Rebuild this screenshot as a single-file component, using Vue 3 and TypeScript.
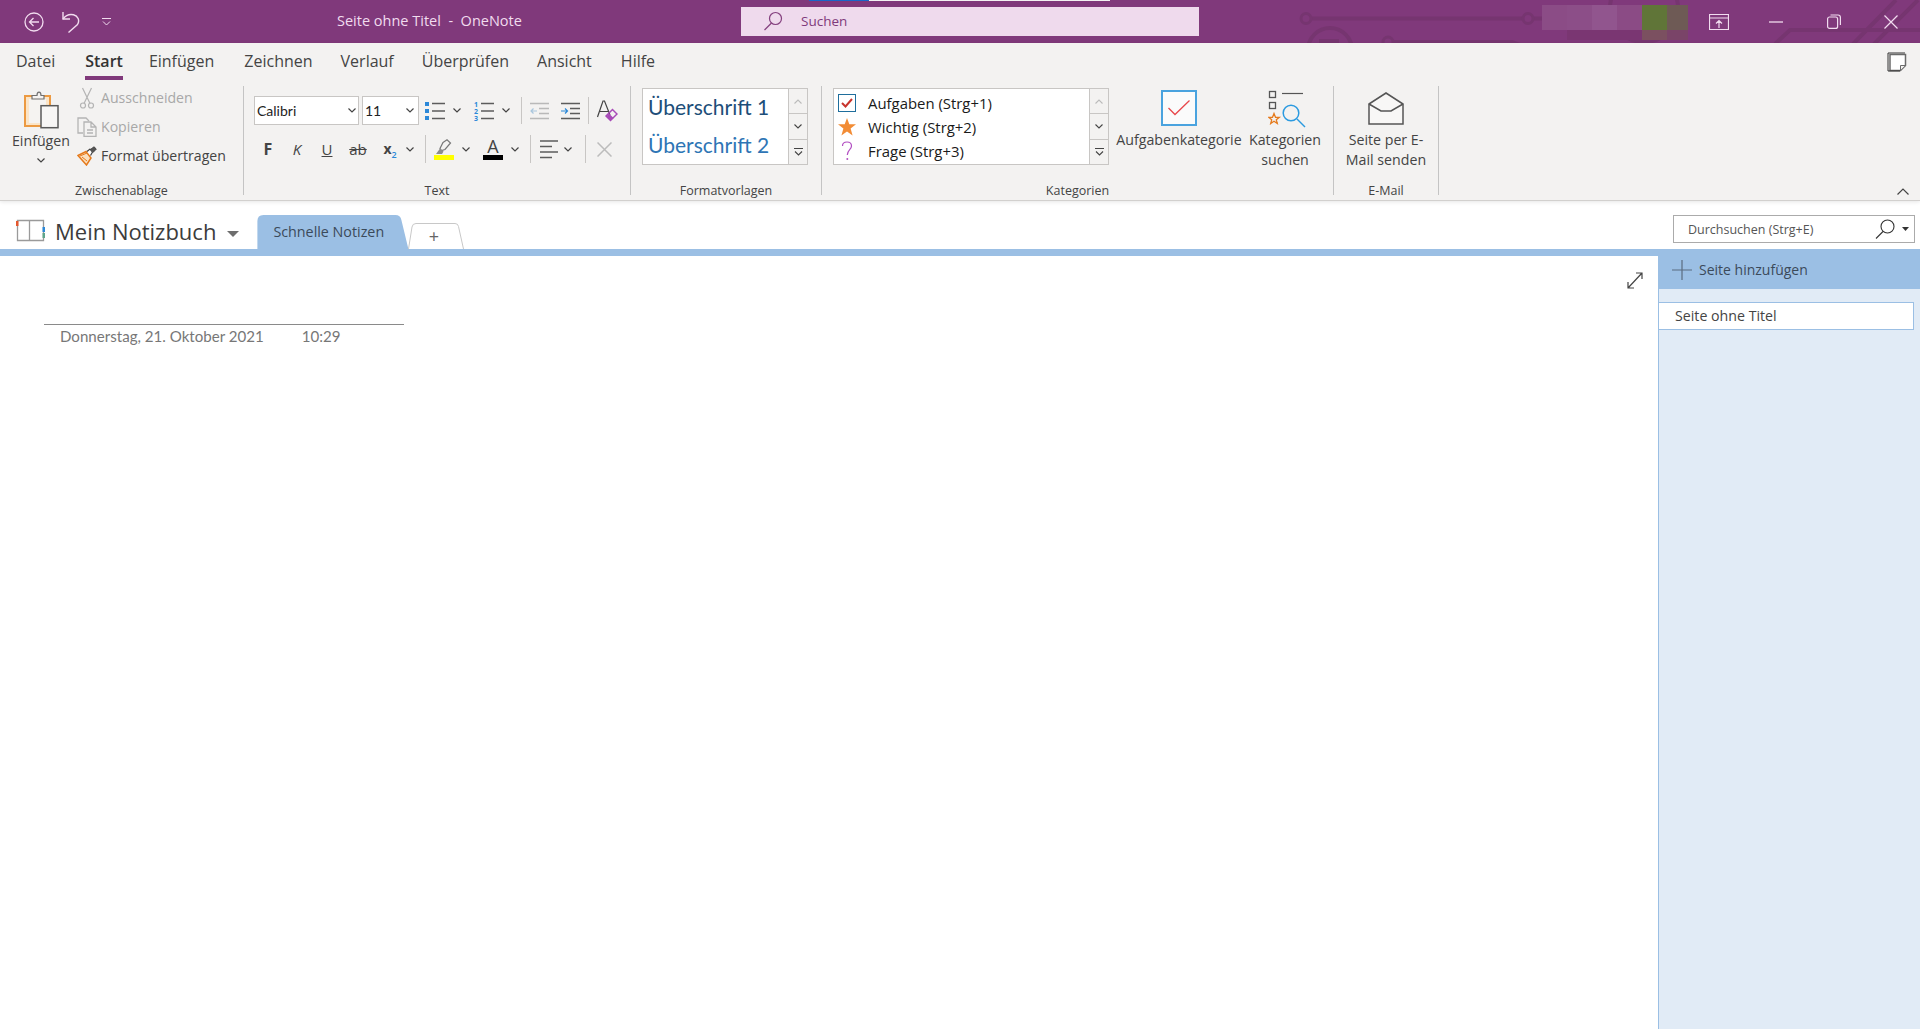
<script setup lang="ts">
const tabs = ['Datei', 'Start', 'Einfügen', 'Zeichnen', 'Verlauf', 'Überprüfen', 'Ansicht', 'Hilfe']
</script>

<template>
  <div class="app">
    <header class="titlebar">
      <svg class="title-art" width="1920" height="43" viewBox="0 0 1920 43" fill="none" stroke="#763570">
        <path d="M1312 18.5H1522M1534 18.5H1545" stroke-width="4" />
        <circle cx="1306" cy="18.5" r="5" stroke-width="3" />
        <circle cx="1528" cy="18.5" r="5" stroke-width="3" />
        <circle cx="1330" cy="50" r="22" stroke-width="4" />
        <path d="M1319 43V39H1339V43" fill="#763570" stroke="none" />
        <circle cx="1388" cy="42" r="5" stroke-width="3" />
        <path d="M1393 42H1512L1520 45" stroke-width="4" />
        <circle cx="1644" cy="8" r="34" stroke-width="4" />
        <path d="M1775 44L1790 30H1920M1853 44L1896 0M1874 44L1918 0" stroke-width="4" />
        <g stroke="none">
          <rect x="1542" y="5" width="25" height="25" fill="#8b4c86" />
          <rect x="1567" y="5" width="25" height="25" fill="#8c4e88" />
          <rect x="1592" y="5" width="25" height="25" fill="#91558e" />
          <rect x="1617" y="5" width="25" height="25" fill="#8b4b85" />
          <rect x="1642" y="5" width="25" height="25" fill="#607538" />
          <rect x="1667" y="5" width="21" height="25" fill="#6e5a55" />
          <rect x="1567" y="30" width="75" height="10" fill="#7a3672" />
          <rect x="1642" y="30" width="25" height="10" fill="#7b5060" />
          <rect x="1667" y="30" width="21" height="10" fill="#7a4468" />
        </g>
      </svg>
      <span class="top-strip" />

      <div class="qat">
        <svg width="20" height="20" viewBox="0 0 20 20" fill="none" stroke="#f1dcef" stroke-width="1.3">
          <circle cx="10" cy="10" r="9" />
          <path d="M15 10H5.5M9.5 6L5.5 10L9.5 14" />
        </svg>
        <svg class="undo" width="20" height="22" viewBox="0 0 20 22" fill="none" stroke="#f1dcef" stroke-width="1.4">
          <path d="M2 1V8H9" />
          <path d="M2 8C5 4 9 3 12.500 3.800C17 5 19 9.500 16.500 13.500L7.500 21.500" />
        </svg>
        <svg class="qat-more" width="9" height="8" viewBox="0 0 9 8" fill="none" stroke="#f1dcef" stroke-width="1">
          <path d="M0 .5H9M1 3.500L4.500 7L8 3.500" />
        </svg>
      </div>
      <div class="doc-title">Seite ohne Titel&nbsp; - &nbsp;OneNote</div>
      <div class="tell-me">
        <svg width="20" height="20" viewBox="0 0 20 20" fill="none" stroke="#85407f" stroke-width="1.2">
          <circle cx="12.500" cy="7.500" r="6" />
          <path d="M8.500 12L1.500 19" />
        </svg>
        <span>Suchen</span>
      </div>
      <div class="win-controls">
        <button type="button" class="win-btn" aria-label="Menüband">
          <svg width="20" height="16" viewBox="0 0 20 16" fill="none" stroke="#f1dcef" stroke-width="1.2">
            <path d="M.5 .5H19.500V15.500H.5ZM.5 4H19.500M10 14V6.500M7 9.500L10 6.500L13 9.500" />
          </svg>
        </button>
        <button type="button" class="win-btn" aria-label="Minimieren">
          <svg width="14" height="2" viewBox="0 0 14 2"><path d="M0 1H14" stroke="#f1dcef" stroke-width="1.300" /></svg>
        </button>
        <button type="button" class="win-btn" aria-label="Wiederherstellen">
          <svg width="14" height="15" viewBox="0 0 14 15" fill="none" stroke="#f1dcef" stroke-width="1.200">
            <rect x=".6" y="3" width="10" height="11.400" rx="2" />
            <path d="M3.500 1H11C12.500 1 13.400 2 13.400 3.500V11" />
          </svg>
        </button>
        <button type="button" class="win-btn" aria-label="Schließen">
          <svg width="14" height="14" viewBox="0 0 14 14" fill="none" stroke="#f1dcef" stroke-width="1.200">
            <path d="M.5 .5L13.500 13.500M13.500 .5L.5 13.500" />
          </svg>
        </button>
      </div>
    </header>

    <section class="ribbon">
      <nav class="tabs">
        <span v-for="tab in tabs" :key="tab" class="tab" :class="{ active: tab === 'Start' }">{{ tab }}</span>
        <svg class="note-icon" width="20" height="20" viewBox="0 0 20 20">
          <path d="M1 1H18" fill="none" stroke="#333" stroke-width="1" />
          <path d="M3 2.500H18.500V13.500L13.500 18.500H3Z" fill="#fff" stroke="#6b6b6b" stroke-width="1.500" />
          <path d="M1 1V19H13" fill="none" stroke="#333" stroke-width="1" />
          <path d="M13.500 18V13.500H18" fill="#f3f2f1" stroke="#6b6b6b" stroke-width="1" />
        </svg>
      </nav>

      <div class="groups">
        <div class="group clipboard">
          <div class="group-body">
            <div class="paste">
              <svg width="36" height="40" viewBox="0 0 36 40" fill="none">
                <rect x="2" y="6" width="25" height="30" fill="#fbe5c8" stroke="#ec9a42" stroke-width="2" />
                <rect x="6" y="9" width="17" height="24" fill="#f5f3f1" />
                <path d="M9 9V5.500H14C14 1 18 1 18 5.500H21V9Z" fill="#f5f3f1" stroke="#707070" stroke-width="1.200" />
                <rect x="18" y="15.700" width="17" height="22" fill="#f7f6f5" stroke="#5a5a5a" stroke-width="1.500" />
              </svg>
              <span class="paste-label">Einfügen</span>
              <svg class="chev paste-chev" width="8" height="5" viewBox="0 0 8 5"><path d="M.5 .5L4 4L7.500 .5" /></svg>
            </div>
            <div class="clip-actions">
              <div class="clip-row disabled">
                <svg width="20" height="22" viewBox="0 0 20 22" fill="none" stroke="#b4b4b4" stroke-width="1.200">
                  <circle cx="6" cy="18.500" r="2.500" />
                  <circle cx="14" cy="18.500" r="2.500" />
                  <path d="M7 16.500L14.500 1M13 16.500L5.500 1" />
                </svg>
                Ausschneiden
              </div>
              <div class="clip-row disabled">
                <svg width="20" height="20" viewBox="0 0 20 20" fill="none" stroke="#b4b4b4" stroke-width="1.300">
                  <path d="M6 16H1V1H9L12 4" />
                  <path d="M7 5H14L19 10V19.500H7ZM14 5V10H19M10 13H16M10 16H16" />
                </svg>
                Kopieren
              </div>
              <div class="clip-row">
                <svg width="20" height="20" viewBox="0 0 20 20" fill="none">
                  <path d="M1 9.500L9 5.500L14 12L9.500 19Z" fill="#fbe0bf" stroke="#e57a1c" stroke-width="1.500" />
                  <path d="M5 11L10 15M3 10L10 7" stroke="#e57a1c" stroke-width="1" />
                  <path d="M10 5.500L13 3L15.500 6L13.500 9.500" fill="#fff" stroke="#444" stroke-width="1.200" />
                  <path d="M13.500 3.500L17 .8L19.300 3L16 6.500" fill="#555" stroke="#444" stroke-width="1" />
                </svg>
                Format übertragen
              </div>
            </div>
          </div>
          <div class="group-label">Zwischenablage</div>
        </div>

        <div class="group text-group">
          <div class="group-body text-rows">
            <div class="text-row">
              <div class="combo font-combo">
                <span class="combo-value">Calibri</span>
                <svg class="chev" width="8" height="5" viewBox="0 0 8 5"><path d="M.5 .5L4 4L7.500 .5" /></svg>
              </div>
              <div class="combo size-combo">
                <span class="combo-value">11</span>
                <svg class="chev" width="8" height="5" viewBox="0 0 8 5"><path d="M.5 .5L4 4L7.500 .5" /></svg>
              </div>
              <svg class="g6" width="20" height="20" viewBox="0 0 20 20">
                <path d="M7 2.500H20M7 10H20M7 17.500H20" stroke="#5c5c5c" stroke-width="1.500" />
                <path d="M0 1H4V5H0ZM0 8H4V12H0ZM0 15H4V19H0Z" fill="#2b88d8" />
              </svg>
              <svg class="chev g8" width="8" height="5" viewBox="0 0 8 5"><path d="M.5 .5L4 4L7.500 .5" /></svg>
              <svg class="g13" width="20" height="20" viewBox="0 0 20 20">
                <path d="M7 2.500H20M7 10H20M7 17.500H20" stroke="#5c5c5c" stroke-width="1.500" />
                <text x="0" y="5.500" class="num">1</text>
                <text x="0" y="12.500" class="num">2</text>
                <text x="0" y="19.500" class="num">3</text>
              </svg>
              <svg class="chev g8" width="8" height="5" viewBox="0 0 8 5"><path d="M.5 .5L4 4L7.500 .5" /></svg>
              <span class="sep g11" />
              <svg class="g8" width="19" height="18" viewBox="0 0 19 18" fill="none">
                <path d="M0 1.500H19M9 6.500H19M9 11.500H19M0 16.500H19" stroke="#b9b9b9" stroke-width="1.500" />
                <path d="M7 9H1M3.500 6.500L1 9L3.500 11.500" stroke="#a9c6dd" stroke-width="1.200" />
              </svg>
              <svg class="g12" width="19" height="18" viewBox="0 0 19 18" fill="none">
                <path d="M0 1.500H19M9 6.500H19M9 11.500H19M0 16.500H19" stroke="#5c5c5c" stroke-width="1.500" />
                <path d="M0 9H6.500M4 6.500L6.500 9L4 11.500" stroke="#2b88d8" stroke-width="1.200" />
              </svg>
              <span class="sep g8" />
              <svg class="g8" width="21" height="22" viewBox="0 0 21 22" fill="none">
                <path d="M.5 17L6 1H7.500L13 15M2.500 11.500H11" stroke="#444" stroke-width="1.200" />
                <path d="M9 16L15.500 9.500L20 14L13.500 20.500Z" stroke="#a84bb8" stroke-width="1.500" />
                <path d="M9.500 16L12 13.500L16.500 18L13.500 20.500Z" fill="#a84bb8" />
              </svg>
            </div>
            <div class="text-row second">
              <span class="fmt bold g7">F</span>
              <span class="fmt italic g15">K</span>
              <span class="fmt under g16">U</span>
              <span class="fmt strike g12">ab</span>
              <span class="fmt sub-x g13">x<sub>2</sub></span>
              <svg class="chev g9" width="8" height="5" viewBox="0 0 8 5"><path d="M.5 .5L4 4L7.500 .5" /></svg>
              <span class="sep tall g11" />
              <svg class="g8" width="20" height="21" viewBox="0 0 20 21" fill="none">
                <path d="M9 3.500L13 0.800L16.500 4L11 10.500L7.500 11.500L6 9.500Z" stroke="#777" stroke-width="1.200" />
                <path d="M2 15L6 9.500L9.500 12.500L8 15Z" fill="#8d8d8d" />
                <rect y="16" width="20" height="5" fill="#ffff00" />
              </svg>
              <svg class="chev g8" width="8" height="5" viewBox="0 0 8 5"><path d="M.5 .5L4 4L7.500 .5" /></svg>
              <span class="font-color g13">
                <span class="font-color-a">A</span>
                <span class="font-color-bar" />
              </span>
              <svg class="chev g8" width="8" height="5" viewBox="0 0 8 5"><path d="M.5 .5L4 4L7.500 .5" /></svg>
              <span class="sep tall g11" />
              <svg class="g9" width="19" height="20" viewBox="0 0 19 20">
                <path d="M0 2H18M0 7.500H12M0 13H18M0 18.500H12" stroke="#5c5c5c" stroke-width="1.500" />
              </svg>
              <svg class="chev g5" width="8" height="5" viewBox="0 0 8 5"><path d="M.5 .5L4 4L7.500 .5" /></svg>
              <span class="sep tall g13" />
              <svg class="g11" width="15" height="15" viewBox="0 0 15 15" fill="none" stroke="#bcbcbc" stroke-width="1.500">
                <path d="M.5 .5L14.500 14.500M14.500 .5L.5 14.500" />
              </svg>
            </div>
          </div>
          <div class="group-label">Text</div>
        </div>

        <div class="group styles-group">
          <div class="group-body">
            <div class="gallery styles-gallery">
              <div class="gallery-items">
                <div class="style-h1">Überschrift 1</div>
                <div class="style-h2">Überschrift 2</div>
              </div>
              <div class="gallery-scroll">
                <span class="scroll-btn dim"><svg width="8" height="5" viewBox="0 0 8 5"><path d="M.5 4.500L4 1L7.500 4.500" /></svg></span>
                <span class="scroll-btn"><svg width="8" height="5" viewBox="0 0 8 5"><path d="M.5 .5L4 4L7.500 .5" /></svg></span>
                <span class="scroll-btn more"><svg width="9" height="8" viewBox="0 0 9 8"><path d="M0 .5H9M1 3.500L4.500 7L8 3.500" /></svg></span>
              </div>
            </div>
          </div>
          <div class="group-label">Formatvorlagen</div>
        </div>

        <div class="group tags-group">
          <div class="group-body">
            <div class="gallery tags-gallery">
              <div class="gallery-items tag-list">
                <div class="tag-row">
                  <svg width="18" height="18" viewBox="0 0 18 18" fill="none">
                    <rect x=".5" y=".5" width="17" height="17" fill="#fff" stroke="#1f6e9c" />
                    <path d="M4 9L7.500 12.500L14 5" stroke="#c8342c" stroke-width="2" />
                  </svg>
                  Aufgaben (Strg+1)
                </div>
                <div class="tag-row">
                  <svg width="18" height="18" viewBox="0 0 18 18">
                    <path d="M9 0L11.300 6.300H18L12.600 10.500L14.600 17.500L9 13.400L3.400 17.500L5.400 10.500L0 6.300H6.700Z" fill="#f28c35" />
                  </svg>
                  Wichtig (Strg+2)
                </div>
                <div class="tag-row">
                  <svg width="18" height="20" viewBox="0 0 18 20" fill="none">
                    <path d="M4.500 5C4.500 2 6.500 1 9 1C11.500 1 13.500 2.500 13.500 5C13.500 8.500 9.300 9 9.300 14" stroke="#b24fc2" stroke-width="1.200" />
                    <circle cx="9.300" cy="18" r="1" fill="#b24fc2" />
                  </svg>
                  Frage (Strg+3)
                </div>
              </div>
              <div class="gallery-scroll">
                <span class="scroll-btn dim"><svg width="8" height="5" viewBox="0 0 8 5"><path d="M.5 4.500L4 1L7.500 4.500" /></svg></span>
                <span class="scroll-btn"><svg width="8" height="5" viewBox="0 0 8 5"><path d="M.5 .5L4 4L7.500 .5" /></svg></span>
                <span class="scroll-btn more"><svg width="9" height="8" viewBox="0 0 9 8"><path d="M0 .5H9M1 3.500L4.500 7L8 3.500" /></svg></span>
              </div>
            </div>
            <div class="big-btn task-btn">
              <span class="big-icon">
                <svg width="36" height="36" viewBox="0 0 36 36" fill="none">
                  <rect x="1" y="1" width="34" height="34" fill="#fbfbfb" stroke="#4aa3df" stroke-width="2" />
                  <path d="M7.500 18L14 24.500L28.500 10.500" stroke="#e8484c" stroke-width="1.300" />
                </svg>
              </span>
              <span class="big-label">Aufgabenkategorie</span>
            </div>
            <div class="big-btn find-btn">
              <span class="big-icon">
                <svg class="find-icon" width="38" height="40" viewBox="0 0 38 40" fill="none">
                  <rect x="1.500" y="1.500" width="6" height="6" stroke="#555" stroke-width="1.300" />
                  <rect x="1.500" y="12.500" width="6" height="6" stroke="#555" stroke-width="1.300" />
                  <path d="M14 3.500H35" stroke="#555" stroke-width="1.200" />
                  <path d="M5 23.500L6.500 27.300H10.300L7.300 29.800L8.300 33.500L5 31.300L1.700 33.500L2.700 29.800L-.3 27.300H3.500Z" transform="translate(1 0)" stroke="#e57a1c" stroke-width="1.300" />
                  <circle cx="23" cy="23" r="7.800" fill="#f3f2f1" stroke="#2b9ae0" stroke-width="1.500" />
                  <path d="M29 29L37 37" stroke="#2b9ae0" stroke-width="1.500" />
                </svg>
              </span>
              <span class="big-label">Kategorien<br>suchen</span>
            </div>
          </div>
          <div class="group-label">Kategorien</div>
        </div>

        <div class="group mail-group">
          <div class="group-body">
            <div class="big-btn mail-btn">
              <span class="big-icon">
                <svg width="36" height="34" viewBox="0 0 36 34" fill="none">
                  <path d="M1 12L18 1L35 12V32H1Z" fill="#f8f7f6" stroke="#555" stroke-width="1.500" />
                  <path d="M1 12L13 19H23L35 12" stroke="#555" stroke-width="1.500" />
                </svg>
              </span>
              <span class="big-label">Seite per E-<br>Mail senden</span>
            </div>
          </div>
          <div class="group-label">E-Mail</div>
        </div>
      </div>

      <svg class="collapse" width="12" height="7" viewBox="0 0 12 7" fill="none" stroke="#444" stroke-width="1.200">
        <path d="M.5 6.500L6 1L11.500 6.500" />
      </svg>
    </section>

    <section class="notebook-row">
      <svg class="nb-icon" width="29" height="23" viewBox="0 0 29 23" fill="none">
        <path d="M1.500 1.500H13.500V21.500H1.500ZM13.500 1.500H27.500V21.500H13.500Z" stroke="#9a9a9a" stroke-width="1.300" />
        <rect x="0" y="2" width="2.500" height="5" fill="#e4572e" />
        <rect x="26.500" y="8" width="2.500" height="5" fill="#2b88d8" />
        <rect x="26.500" y="14" width="2.500" height="5" fill="#5fa58a" />
      </svg>
      <span class="nb-name">Mein Notizbuch</span>
      <svg class="nb-caret" width="12" height="6" viewBox="0 0 12 6"><path d="M0 0H12L6 6Z" fill="#6e6e6e" /></svg>
      <div class="section-tab">Schnelle Notizen</div>
      <div class="add-tab">
        <svg class="add-tab-shape" width="56" height="26" viewBox="0 0 56 26" fill="none" stroke="#c8c8c8">
          <path d="M.5 26L4 4Q4.500 .5 8 .5H47Q50 .5 50.500 3.500L55.500 26" />
        </svg>
        <span class="add-plus">+</span>
      </div>
      <div class="page-search">
        <span>Durchsuchen (Strg+E)</span>
        <svg class="search-glass" width="20" height="20" viewBox="0 0 20 20" fill="none" stroke="#333" stroke-width="1.100">
          <circle cx="12.500" cy="7.500" r="6.500" />
          <path d="M8 12.500L1 19.500" />
        </svg>
        <svg width="7" height="4" viewBox="0 0 7 4"><path d="M0 0H7L3.500 4Z" fill="#333" /></svg>
      </div>
    </section>
    <div class="accent-bar" />

    <main class="workspace">
      <div class="page">
        <svg class="expand" width="16" height="17" viewBox="0 0 16 17" fill="none" stroke="#444" stroke-width="1.200">
          <path d="M1 16L15 1M9 1H15V7M1 10V16H7" />
        </svg>
        <div class="page-head">
          <span>Donnerstag, 21. Oktober 2021</span>
          <span class="page-time">10:29</span>
        </div>
      </div>
      <aside class="page-list">
        <div class="add-page">
          <svg width="20" height="20" viewBox="0 0 20 20"><path d="M10 0V20M0 10H20" stroke="#5a6c80" stroke-width="1.200" /></svg>
          <span>Seite hinzufügen</span>
        </div>
        <div class="page-item">Seite ohne Titel</div>
      </aside>
    </main>
  </div>
</template>

<style scoped>
.app {
  position: relative;
  display: flex;
  flex-direction: column;
  width: 1920px;
  height: 1029px;
  overflow: hidden;
  background: #fff;
  font-family: "Open Sans", sans-serif;
  font-size: 14.2px;
  color: #444;
}

/* title bar */
.titlebar {
  position: relative;
  display: flex;
  flex: none;
  height: 43px;
  background: #80397b;
  align-items: center;
}
.title-art {
  position: absolute;
  inset: 0;
}
.top-strip {
  position: absolute;
  top: 0;
  left: 809px;
  width: 301px;
  height: 1px;
  background: linear-gradient(90deg, #1a66c8 60px, #f3f2f1 60px);
}
.qat {
  position: relative;
  display: flex;
  align-items: center;
  width: 337px;
  padding-left: 24px;
  box-sizing: border-box;
}
.undo {
  margin-left: 17px;
}
.qat-more {
  margin-left: 21px;
}
.doc-title {
  position: relative;
  width: 404px;
  color: #f1dcef;
  font-size: 14.5px;
  margin-top: -3px;
  white-space: nowrap;
}
.tell-me {
  position: relative;
  display: flex;
  align-items: center;
  width: 458px;
  height: 29px;
  margin-top: -1px;
  padding-left: 22px;
  box-sizing: border-box;
  background: #efdaed;
  color: #80397b;
  font-size: 13.5px;
}
.tell-me span {
  margin-left: 18px;
}
.win-controls {
  position: relative;
  display: flex;
  margin-left: auto;
  width: 230px;
}
.win-btn {
  display: flex;
  align-items: center;
  justify-content: center;
  flex: 1;
  height: 43px;
  padding: 0;
  border: 0;
  background: none;
}

/* ribbon */
.ribbon {
  position: relative;
  flex: none;
  background: #f3f2f1;
  border-bottom: 1px solid #d2d0ce;
  box-shadow: 0 1px 4px rgba(0, 0, 0, 0.1);
  z-index: 1;
}
.tabs {
  display: flex;
  align-items: center;
  height: 37px;
  padding-left: 16px;
  gap: 28px;
  font-size: 16px;
  line-height: 37px;
}
.tab {
  position: relative;
}
/* nudges to land each tab where Segoe UI's wider spacing puts it */
.tab.active {
  margin: 0 -2px 0 2px;
  font-weight: 600;
  color: #333;
}
.tab:nth-child(3) {
  margin-right: 2px;
}
.tab:nth-child(7) {
  margin-right: 1px;
}
.tab.active::after {
  content: "";
  position: absolute;
  left: 0;
  right: 0;
  bottom: 0;
  height: 4px;
  background: #80397b;
}
.note-icon {
  margin-left: auto;
  margin-right: 13px;
}
.groups {
  display: flex;
  height: 120px;
  padding-top: 6px;
  box-sizing: border-box;
}
.group {
  display: flex;
  flex-direction: column;
  height: 109px;
  border-right: 1px solid #c4c4c4;
  box-sizing: content-box;
}
.group-body {
  display: flex;
  flex: 1;
  min-height: 0;
}
.group-label {
  flex: none;
  height: 18px;
  margin-bottom: -5px;
  text-align: center;
  font-size: 12.5px;
  line-height: 18px;
}
.clipboard {
  width: 243px;
}
.text-group {
  width: 386px;
}
.styles-group {
  width: 190px;
}
.tags-group {
  width: 511px;
}
.mail-group {
  width: 104px;
}

/* clipboard */
.paste {
  display: flex;
  flex-direction: column;
  align-items: center;
  width: 82px;
  margin-right: -5px;
  padding-top: 4px;
  box-sizing: border-box;
}
.paste-label {
  margin-top: 1px;
  line-height: 20px;
}
.paste-chev {
  margin-top: 7px;
}
.chev {
  fill: none;
  stroke: #444;
  stroke-width: 1.200;
  flex: none;
}
.clip-actions {
  display: flex;
  flex-direction: column;
  margin-top: -3px;
}
.clip-row {
  display: flex;
  align-items: center;
  gap: 4px;
  height: 29px;
  font-size: 14.1px;
  white-space: nowrap;
}
.clip-row.disabled {
  color: #a8a8a8;
}

/* text group */
.text-rows {
  flex-direction: column;
  padding: 10px 0 0 10px;
}
.text-row {
  display: flex;
  align-items: center;
  height: 29px;
}
.text-row.second {
  height: 28px;
  margin-top: 10px;
}
.combo {
  display: flex;
  align-items: center;
  justify-content: space-between;
  height: 29px;
  margin-right: 3px;
  padding: 0 2px 0 2px;
  background: #fff;
  border: 1px solid #c8c6c4;
  box-sizing: border-box;
}
.font-combo {
  width: 105px;
}
.size-combo {
  width: 57px;
  margin-right: 0;
  padding-right: 4px;
}
.combo-value {
  font-family: "Lato", sans-serif;
  font-size: 14px;
  color: #222;
}
.num {
  font-family: "Open Sans", sans-serif;
  font-size: 7px;
  font-weight: 700;
  fill: #2b88d8;
}
.sep {
  flex: none;
  width: 1px;
  height: 27px;
  background: #c8c6c4;
}
.sep.tall {
  height: 28px;
}
.fmt {
  flex: none;
  width: 14px;
  text-align: center;
  font-size: 15px;
  line-height: 20px;
  color: #444;
}
.fmt.bold {
  font-weight: 700;
  font-size: 16px;
}
.fmt.italic {
  font-style: italic;
}
.fmt.under {
  text-decoration: underline;
}
.fmt.strike {
  width: 24px;
  text-decoration: line-through;
}
.fmt.sub-x {
  font-weight: 700;
  font-size: 14px;
}
.fmt.sub-x sub {
  font-size: 9px;
  font-weight: 600;
  color: #2b88d8;
  line-height: 0;
}
.font-color {
  display: flex;
  flex-direction: column;
  align-items: center;
  width: 20px;
  flex: none;
}
.font-color-a {
  font-size: 18px;
  line-height: 17px;
  color: #444;
}
.font-color-bar {
  width: 20px;
  height: 5px;
  background: #000;
}
.g5 { margin-left: 5px; }
.g6 { margin-left: 6px; }
.g7 { margin-left: 7px; }
.g8 { margin-left: 8px; }
.g9 { margin-left: 9px; }
.g11 { margin-left: 11px; }
.g12 { margin-left: 12px; }
.g13 { margin-left: 13px; }
.g15 { margin-left: 15px; }
.g16 { margin-left: 16px; }

/* galleries */
.gallery {
  display: flex;
  height: 77px;
  margin: 2px 0 0 11px;
  border: 1px solid #c8c6c4;
  box-sizing: border-box;
}
.styles-gallery {
  width: 166px;
}
.tags-gallery {
  flex: none;
  width: 276px;
}
.gallery-items {
  flex: 1;
  background: #fff;
}
.gallery-scroll {
  display: flex;
  flex-direction: column;
  flex: none;
  width: 18px;
  border-left: 1px solid #c8c6c4;
}
.scroll-btn {
  display: flex;
  align-items: center;
  justify-content: center;
  flex: 1;
  border-top: 1px solid #c8c6c4;
}
.scroll-btn:first-child {
  border-top: 0;
}
.scroll-btn svg {
  fill: none;
  stroke: #444;
  stroke-width: 1.100;
}
.scroll-btn.dim svg {
  stroke: #bbb;
}
.style-h1,
.style-h2 {
  padding-left: 5px;
  font-family: "Lato", sans-serif;
  font-size: 21px;
  white-space: nowrap;
}
.style-h1 {
  line-height: 35px;
  color: #1d4e79;
}
.style-h2 {
  margin-top: 2px;
  line-height: 38px;
  color: #2e75b5;
}
.tag-list {
  padding-top: 2px;
}
.tag-row {
  display: flex;
  align-items: center;
  gap: 12px;
  height: 24px;
  padding-left: 4px;
  color: #1a1a1a;
  font-size: 14.9px;
  white-space: nowrap;
}
.big-btn {
  display: flex;
  flex-direction: column;
  align-items: center;
  flex: none;
  padding-top: 4px;
  text-align: center;
  line-height: 20px;
  white-space: nowrap;
}
.big-icon {
  display: flex;
  align-items: flex-start;
  justify-content: center;
  height: 40px;
}
.task-btn {
  width: 132px;
  margin-left: 4px;
}
.find-btn {
  width: 76px;
  margin-left: 2px;
}
.find-icon {
  margin-left: 3px;
}
.mail-btn {
  width: 104px;
  padding-top: 6px;
}
.mail-btn .big-icon {
  height: 38px;
}
.collapse {
  position: absolute;
  right: 11px;
  bottom: 5px;
}

/* notebook row */
.notebook-row {
  display: flex;
  flex: none;
  align-items: flex-end;
  height: 48px;
  padding-left: 16px;
  box-sizing: border-box;
}
.nb-icon {
  margin-bottom: 7px;
}
.nb-name {
  margin: 0 0 0 10px;
  font-size: 22px;
  line-height: 36px;
  color: #3c3c3c;
  white-space: nowrap;
}
.nb-caret {
  margin: 0 0 12px 11px;
}
.section-tab {
  width: 151px;
  height: 34px;
  margin-left: 18px;
  padding-left: 16px;
  box-sizing: border-box;
  background: #9bbfe4;
  clip-path: path("M0 34V6Q0 0 6 0H138Q143 0 144 5L151 34Z");
  font-size: 14.3px;
  line-height: 34px;
  color: #3b4a5a;
  white-space: nowrap;
}
.add-tab {
  position: relative;
  width: 55px;
  height: 25px;
  text-align: center;
  font-size: 18px;
  line-height: 25px;
  color: #666;
}
.add-tab-shape {
  position: absolute;
  left: 0;
  top: -1px;
}
.add-plus {
  display: block;
  margin-right: 4px;
}
.page-search {
  display: flex;
  align-items: center;
  width: 242px;
  height: 28px;
  margin: 0 5px 6px auto;
  padding: 0 5px 0 14px;
  box-sizing: border-box;
  border: 1px solid #ababab;
  font-size: 12.5px;
  color: #555;
}
.search-glass {
  margin: 0 7px 0 auto;
}
.accent-bar {
  flex: none;
  height: 7px;
  background: #9bbfe4;
}

/* page area */
.workspace {
  display: flex;
  flex: 1;
  min-height: 0;
}
.page {
  position: relative;
  flex: 1;
  padding: 68px 0 0 44px;
}
.expand {
  position: absolute;
  top: 16px;
  right: 15px;
}
.page-head {
  display: flex;
  width: 344px;
  padding-left: 16px;
  border-top: 1px solid #8a8a8a;
  font-family: "Lato", sans-serif;
  font-size: 15.100px;
  line-height: 22px;
  color: #777;
}
.page-time {
  margin-left: 38px;
}
.page-list {
  flex: none;
  width: 262px;
  box-sizing: border-box;
  background: #e1ebf6;
  border-left: 1px solid #9bbfe4;
}
.add-page {
  display: flex;
  align-items: center;
  gap: 7px;
  height: 33px;
  padding: 0 0 6px 13px;
  box-sizing: border-box;
  background: #9bbfe4;
  color: #3b4a5a;
  font-size: 14px;
}
.page-item {
  width: 255px;
  height: 28px;
  margin-top: 13px;
  padding-left: 16px;
  box-sizing: border-box;
  background: #fff;
  border: 1px solid #9bbfe4;
  border-left: 0;
  font-size: 14.2px;
  line-height: 25px;
  color: #444;
}
</style>

<style>
html,
body {
  margin: 0;
  background: #fff;
}
</style>
